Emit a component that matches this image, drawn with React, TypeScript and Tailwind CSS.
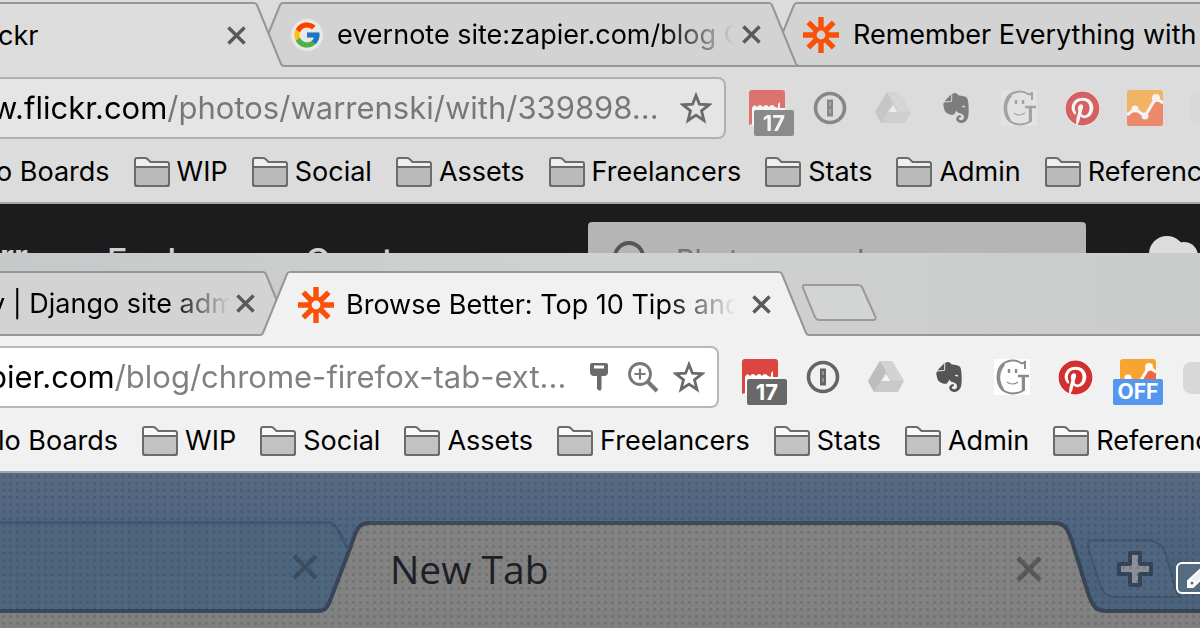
import type { ReactNode } from "react";
import { FaEvernote, FaPinterest } from "react-icons/fa";
import { FcGoogle } from "react-icons/fc";

type Tone = "dim" | "bright";

function CloseIcon({ className }: { className: string }) {
  return (
    <svg viewBox="0 0 20 20" className={className} fill="none" stroke="currentColor" strokeWidth="3.6" aria-hidden="true">
      <path d="M1.5 1.5L18.5 18.5M18.5 1.5L1.5 18.5" />
    </svg>
  );
}

function ZapierIcon() {
  return (
    <svg viewBox="0 0 36 36" className="size-9 shrink-0" stroke="#f9500a" strokeWidth="5.4" fill="none" aria-hidden="true">
      <path d="M18 0V12M18 24V36M0 18H12M24 18H36M5.3 5.3L14 14M22 22L30.7 30.7M30.7 5.3L22 14M14 22L5.3 30.7" />
      <circle cx="18" cy="18" r="6.4" strokeWidth="4" />
    </svg>
  );
}

function FolderIcon() {
  return (
    <svg viewBox="0 0 36 30" className="h-[30px] w-9 shrink-0" stroke="#6b6b6b" strokeWidth="2" aria-hidden="true">
      <path d="M1 27V3Q1 1 3 1H11Q13 1 14.500 3L16.500 5H33Q35 5 35 7V27Q35 29 33 29H3Q1 29 1 27Z" fill="#ffffff" fillOpacity=".55" />
      <path d="M1 10H35V27Q35 29 33 29H3Q1 29 1 27Z" className="fill-black/22" />
    </svg>
  );
}

function StarIcon() {
  return (
    <svg viewBox="0 0 32 32" className="size-8" fill="none" stroke="#6a6a6a" strokeWidth="2.8" aria-hidden="true">
      <path d="M16 3.500L19.400 12.200L29 12.800L21.500 18.800L24 28.500L16 23.200L8 28.500L10.500 18.800L3 12.800L12.600 12.200Z" />
    </svg>
  );
}

function KeyIcon() {
  return (
    <svg viewBox="0 0 20 28" className="h-7 w-5" fill="#6a6a6a" aria-hidden="true">
      <path fillRule="evenodd" d="M3 0H17Q19 0 19 2V9Q19 13 15 13H12.500V26L11 28L8 26V13H5Q1 13 1 9V2Q1 0 3 0ZM5 2.500V5.500H15V2.500Z" />
    </svg>
  );
}

function ZoomIcon() {
  return (
    <svg viewBox="0 0 32 32" className="size-8" fill="none" stroke="#777" strokeWidth="2.800" aria-hidden="true">
      <circle cx="13" cy="13" r="10.500" />
      <path d="M20.500 20.500L30 30" strokeWidth="4" />
      <path d="M13 7.500V18.500M7.500 13H18.500" strokeWidth="2.200" />
    </svg>
  );
}

function CalendarIcon() {
  return (
    <svg viewBox="0 0 36 36" className="size-9" aria-hidden="true">
      <path d="M3 0H33Q36 0 36 3V18H3V34L0 35V3Q0 0 3 0Z" fill="#dc4640" />
      <path d="M3 36V18Q5 13 8 17Q11 13 14 17Q17 13 20 17Q23 13 26 17L29 18V14L31 12V18H36V36Z" fill="#fff" />
    </svg>
  );
}

function OnePasswordIcon() {
  return (
    <svg viewBox="0 0 36 36" className="size-9" fill="none" stroke="#646464" aria-hidden="true">
      <circle cx="18" cy="18" r="14.500" strokeWidth="3.600" />
      <path d="M18 9.500V26.500" strokeWidth="6" />
      <path d="M18 12V24" strokeWidth="1.500" stroke="#a0a0a0" strokeDasharray="4 3" />
    </svg>
  );
}

function DriveIcon() {
  return (
    <svg viewBox="0 0 36 36" className="size-9" aria-hidden="true">
      <path d="M12 2H24L36 22L30 33H6L0 22Z" fill="#c9c9c9" />
      <path d="M12 2L18 12L6 33L0 22Z" fill="#bdbdbd" />
      <path d="M12 2H24L36 22H24Z" fill="#d3d3d3" />
      <path d="M18 15L22.500 22H13.500Z" fill="#f4f4f4" />
    </svg>
  );
}

function FaceIcon({ tone }: { tone: Tone }) {
  return (
    <svg viewBox="0 0 36 36" className="size-9" fill="none" stroke="#8b8b8b" aria-hidden="true">
      <rect width="36" height="36" fill="#fff" fillOpacity={tone === "dim" ? 0.25 : 0.9} stroke="none" />
      <path d="M31 10V2Q30 5 27 4Q23 1 18 1.500Q4 3 3.500 18Q4 33 18 34.500Q25 34.500 30 31V17" strokeWidth="2" />
      <path d="M10 5Q0 17 9 31" strokeWidth="2.800" />
      <path d="M24 17H35M29 17V32" strokeWidth="2.400" />
      <path d="M15 10V14M22 10V14" strokeWidth="2.400" />
      <path d="M13 23Q18 27 24 23" strokeWidth="1.200" />
    </svg>
  );
}

function AnalyticsIcon() {
  return (
    <svg viewBox="0 0 36 36" className="size-9" aria-hidden="true">
      <rect width="36" height="36" rx="3" fill="#f9a432" />
      <path d="M0 24L8 19L18 27L29 9L36 14V33Q36 36 33 36H3Q0 36 0 33Z" fill="#f2673a" />
      <path d="M0 25L8 19L18 26L29 8L36 13" fill="none" stroke="#fff" strokeWidth="3" />
      <circle cx="8" cy="19" r="3.500" fill="#fff" />
      <circle cx="18" cy="26" r="3.500" fill="#fff" />
      <circle cx="29" cy="8" r="4" fill="#fff" />
    </svg>
  );
}

function TabEdge({ side, fill, active }: { side: "left" | "right"; fill: string; active?: boolean }) {
  const right = side === "right";
  const line = right ? "M0 1Q2 1 3 3L27 62Q28 64 30 64" : "M30 1Q28 1 27 3L3 62Q2 64 0 64";
  return (
    <svg viewBox="0 0 30 65" className="h-[65px] w-[30px] shrink-0" aria-hidden="true">
      <path d={right ? line + "V65H0Z" : line + "V65H30Z"} fill={fill} />
      <path d={line} fill="none" stroke="#969696" strokeWidth="2" />
      {!active && <path d="M0 64H30" stroke="#969696" strokeWidth="2" />}
    </svg>
  );
}

const bookmarks = ["WIP", "Social", "Assets", "Freelancers", "Stats", "Admin", "References"];

function BookmarkBar({ first, firstClass }: { first: string; firstClass: string }) {
  return (
    <nav aria-label="Bookmarks" className="flex h-[62px] items-center gap-6 overflow-hidden border-b-2 border-[#a6a6a6] whitespace-nowrap">
      <a href="#boards" className={`shrink-0 ${firstClass}`}>{first}</a>
      {bookmarks.map((name) => (
        <a key={name} href={`#${name.toLowerCase()}`} className="flex shrink-0 items-center gap-[7px]">
          <FolderIcon />
          {name}
        </a>
      ))}
    </nav>
  );
}

function ExtButton({ label, children }: { label: string; children: ReactNode }) {
  return (
    <button type="button" aria-label={label} className="relative flex size-9 shrink-0 items-center justify-center">
      {children}
    </button>
  );
}

function Extensions({ tone }: { tone: Tone }) {
  return (
    <div className={`flex shrink-0 gap-[27px] overflow-hidden py-4 pl-[23px] ${tone === "dim" ? "w-[474px] opacity-70" : "w-[481px]"}`}>
      <ExtButton label="Calendar">
        <CalendarIcon />
        <span className="absolute top-5 left-[5px] flex h-[26px] w-10 items-center justify-center rounded-xs bg-[#686868] text-[22px] leading-6 font-bold text-white">17</span>
      </ExtButton>
      <ExtButton label="Password manager"><OnePasswordIcon /></ExtButton>
      <ExtButton label="Drive"><DriveIcon /></ExtButton>
      <ExtButton label="Notes"><FaEvernote className="size-[34px] text-[#555]" /></ExtButton>
      <ExtButton label="Face"><FaceIcon tone={tone} /></ExtButton>
      <ExtButton label="Pinterest"><FaPinterest className="size-[35px] rounded-full bg-white text-[#d32f2f]" /></ExtButton>
      <ExtButton label="Analytics">
        <AnalyticsIcon />
        {tone === "bright" && (
          <span className="absolute top-5 -left-[7px] flex h-[26px] w-[50px] items-center justify-center rounded-xs bg-[#5596ee] text-[21px] leading-6 font-bold text-white">OFF</span>
        )}
      </ExtButton>
      <ExtButton label="More"><span className="mt-px h-8 w-9 rounded-lg bg-[#d8d8d8]" /></ExtButton>
    </div>
  );
}

function FlickrWindow() {
  return (
    <section className="h-[253px] shrink-0 overflow-hidden bg-[#dcdcdc]">
      <div className="flex border-b-2 border-[#969696] pt-[2px]">
        <div className="relative z-20 -mb-0.5 flex w-[284px] shrink-0">
          <div className="flex min-w-0 flex-1 items-center justify-between border-t-2 border-[#969696] bg-[#dcdcdc] pr-2">
            <span className="-indent-0.5">ckr</span>
            <button type="button" aria-label="Close tab"><CloseIcon className="size-[19px] text-[#5a5a5a]" /></button>
          </div>
          <TabEdge side="right" fill="#dcdcdc" active />
        </div>
        <div className="relative z-10 -mb-0.5 -ml-[31px] flex w-[546px] shrink-0">
          <TabEdge side="left" fill="#d3d3d3" />
          <div className="flex min-w-0 flex-1 items-center border-y-2 border-[#969696] bg-[#d3d3d3] pr-2 pl-2">
            <span className="flex size-8 shrink-0 items-center justify-center rounded-full bg-[#e8e8e8]"><FcGoogle className="size-[30px]" /></span>
            <span className="ml-3.5 min-w-0 flex-1 overflow-hidden whitespace-nowrap [mask-image:linear-gradient(90deg,#000_82%,transparent)]">evernote site:zapier.com/blog Google</span>
            <button type="button" aria-label="Close tab" className="ml-2"><CloseIcon className="size-[19px] text-[#5a5a5a]" /></button>
          </div>
          <TabEdge side="right" fill="#d3d3d3" />
        </div>
        <div className="-mb-0.5 -ml-8 flex min-w-0 flex-1">
          <TabEdge side="left" fill="#d3d3d3" />
          <div className="flex min-w-0 flex-1 items-center gap-3.5 overflow-hidden border-y-2 border-[#969696] bg-[#d3d3d3] pl-1.5 whitespace-nowrap">
            <ZapierIcon />
            <span>Remember Everything with</span>
          </div>
        </div>
      </div>
      <div className="flex items-center pt-[7px]">
        <div className="flex h-[62px] min-w-0 flex-1 items-center rounded-r-lg border-2 border-l-0 border-[#b0b0b0] bg-[#e5e5e5] pr-3">
          <input aria-label="Address" defaultValue="w.flickr.com/photos/warrenski/with/339898..." className="-ml-2 min-w-0 flex-1 bg-[linear-gradient(90deg,#000_176px,#777_176px)] bg-clip-text text-[31px] leading-9 text-transparent outline-none" />
          <button type="button" aria-label="Bookmark this page"><StarIcon /></button>
        </div>
        <Extensions tone="dim" />
      </div>
      <BookmarkBar first="o Boards" firstClass="-indent-1" />
      <div className="flex bg-[#1c1c1c]">
        <nav aria-label="Site" className="flex w-[588px] shrink-0 gap-[76px] pt-[37px] text-[34px] leading-10 font-medium text-[#d0d0d0]">
          <a href="#you" className="w-[31px] leading-8 font-bold">rr</a>
          <a href="#explore">Explore</a>
          <a href="#create">Create</a>
        </nav>
        <label className="mt-[18px] flex w-[498px] items-start gap-7 rounded-t-sm bg-[#b5b5b5] pl-6">
          <svg viewBox="0 0 36 36" className="mt-[18px] size-9 shrink-0" fill="none" stroke="#555" strokeWidth="4" aria-hidden="true">
            <circle cx="17" cy="17" r="14" />
            <path d="M27 27L35 35" />
          </svg>
          <input aria-label="Search" placeholder="Photos, people, or groups" className="mt-[18px] min-w-0 flex-1 text-[29px] leading-10 outline-none placeholder:text-[#737373]" />
        </label>
        <svg viewBox="0 0 52 36" className="mt-8 ml-[62px] h-9 w-[52px] shrink-0" fill="#dcdcdc" aria-hidden="true">
          <circle cx="19" cy="18" r="18" />
          <circle cx="36" cy="20" r="14" />
        </svg>
      </div>
    </section>
  );
}

function BlogWindow() {
  return (
    <section className="relative shrink-0 overflow-hidden bg-[#f1f1f1]">
      <div className="flex border-b-2 border-[#969696] bg-linear-to-r from-[#c6c8c9] via-[#d0d2d2] to-[#cacccc] pt-[18px]">
        <div className="-mb-0.5 flex w-[293px] shrink-0">
          <div className="flex min-w-0 flex-1 items-center justify-between border-y-2 border-[#969696] bg-[#d3d3d3] pr-2">
            <span className="overflow-hidden -indent-2.5 whitespace-nowrap [mask-image:linear-gradient(90deg,#000_72%,transparent_98%)]">y | Django site adm</span>
            <button type="button" aria-label="Close tab"><CloseIcon className="size-[19px] text-[#5a5a5a]" /></button>
          </div>
          <TabEdge side="right" fill="#d3d3d3" />
        </div>
        <div className="relative z-10 -mb-0.5 -ml-[33px] flex w-[549px] shrink-0">
          <TabEdge side="left" fill="#f1f1f1" active />
          <div className="flex min-w-0 flex-1 items-center border-t-2 border-[#969696] bg-[#f1f1f1] pr-2 pl-2">
            <ZapierIcon />
            <span className="ml-3 min-w-0 flex-1 overflow-hidden whitespace-nowrap [mask-image:linear-gradient(90deg,#000_80%,transparent_98%)]">Browse Better: Top 10 Tips and</span>
            <button type="button" aria-label="Close tab" className="ml-2"><CloseIcon className="size-[19px] text-[#5a5a5a]" /></button>
          </div>
          <TabEdge side="right" fill="#f1f1f1" active />
        </div>
        <button type="button" aria-label="New tab" className="-ml-2 self-center">
          <svg viewBox="0 0 76 38" className="h-[38px] w-[76px]" fill="#d3d5d5" stroke="#999" strokeWidth="2" aria-hidden="true">
            <path d="M4 1H57Q60 1 61 3L74 32Q76 36 72 36H19Q15 36 14 33L2 4Q1 1 4 1Z" />
          </svg>
        </button>
      </div>
      <div className="flex items-center pt-[7px]">
        <div className="flex h-[62px] min-w-0 flex-1 items-center rounded-r-lg border-2 border-l-0 border-[#b8b8b8] bg-white pr-3">
          <input aria-label="Address" defaultValue="pier.com/blog/chrome-firefox-tab-ext..." className="-ml-3 min-w-0 flex-1 bg-[linear-gradient(90deg,#000_128px,#808080_128px)] bg-clip-text text-[31px] leading-9 text-transparent outline-none" />
          <div className="flex items-center gap-3.5">
            <button type="button" aria-label="Saved password" className="mr-1"><KeyIcon /></button>
            <button type="button" aria-label="Zoom"><ZoomIcon /></button>
            <button type="button" aria-label="Bookmark this page"><StarIcon /></button>
          </div>
        </div>
        <Extensions tone="bright" />
      </div>
      <BookmarkBar first="lo Boards" firstClass="-indent-0.5" />
    </section>
  );
}

function ClassicWindow() {
  return (
    <section className="relative flex flex-1 flex-col bg-linear-to-b from-[#576983] to-[#4b627d] to-60% pt-12">
      <div className="flex">
        <div className="flex w-[350px] min-w-0 shrink-0">
          <div className="flex flex-1 items-center justify-end border-t-3 border-b-4 border-[#384a5f] border-t-[#44566e] bg-[#4d667e] pr-3">
            <button type="button" aria-label="Close tab"><CloseIcon className="size-[26px] text-[#3e4f62]" /></button>
          </div>
          <svg viewBox="0 0 20 92" className="h-[92px] w-5 shrink-0" aria-hidden="true">
            <path d="M0 1Q8 3 17 27L20 92H0Z" fill="#4d667e" />
            <path d="M0 1.500Q7 3 17 27" fill="none" stroke="#44566e" strokeWidth="3" />
          </svg>
        </div>
        <div className="relative -ml-8 flex min-w-0 flex-1">
          <svg viewBox="0 0 52 92" className="h-[92px] w-[52px] shrink-0" aria-hidden="true">
            <path d="M52 2C38 2 38 12 31 30L15 72C10 86 8 90 0 90V92H52Z" fill="#828282" />
            <path d="M52 2C38 2 38 12 31 30L15 72C10 86 8 90 0 90" fill="none" stroke="#3a4658" strokeWidth="4" />
          </svg>
          <div className="flex min-w-0 flex-1 items-center justify-between border-t-4 border-[#3f4b5c] bg-[#828282] pr-3 pl-5">
            <span className="font-['Open_Sans',sans-serif] text-[39px] leading-[48px] text-[#1d1f26]">New Tab</span>
            <button type="button" aria-label="Close tab"><CloseIcon className="size-[26px] text-[#595959]" /></button>
          </div>
          <svg viewBox="0 0 52 92" className="h-[92px] w-[52px] shrink-0" aria-hidden="true">
            <path d="M0 2C14 2 15 12 21 30L34 72C39 86 42 90 52 90V92H0Z" fill="#828282" />
            <path d="M0 2C14 2 15 12 21 30L34 72C39 86 42 90 52 90" fill="none" stroke="#3a4658" strokeWidth="4" />
          </svg>
        </div>
        <div className="-ml-5 flex w-[114px] shrink-0 items-start pt-[18px]">
          <button type="button" aria-label="New tab">
            <svg viewBox="0 0 96 60" className="h-[60px] w-24" aria-hidden="true">
              <path d="M5 1.500H62Q76 2 80 16L90 52Q92 58 96 58H28Q19 58 15 48L3 12Q0 3 5 1.500Z" fill="#506680" stroke="#43556d" strokeWidth="2" />
              <path d="M44 14H54V25H65V35H54V46H44V35H33V25H44Z" fill="#8b9096" stroke="#36445b" strokeWidth="4" strokeLinejoin="round" />
            </svg>
          </button>
        </div>
      </div>
      <div className="flex flex-1 bg-[#808080]">
        <div className="flex-1" />
        <div className="-mt-1 h-1 w-[96px] bg-[#3a4658]" />
      </div>
      <div className="pointer-events-none absolute inset-0 bg-[radial-gradient(circle,rgba(20,30,40,0.16)_1px,transparent_2px)] bg-size-[7px_7px]" />
      <button type="button" aria-label="Edit" className="absolute top-[89px] -right-3 flex h-8 w-9 items-center justify-end rounded-md border-2 border-white bg-[#566a80]">
        <svg viewBox="0 0 24 24" className="size-6" fill="none" stroke="#fff" strokeWidth="2" aria-hidden="true">
          <path d="M2 21V15L16 2L21 7L7 21Z" fill="#e9edf1" />
          <circle cx="6" cy="17" r="2.500" fill="#566a80" />
        </svg>
      </button>
    </section>
  );
}

export default function App() {
  return (
    <main className="flex min-h-screen flex-col overflow-hidden bg-[#808080] font-[Inter,sans-serif] text-[27px] leading-8 text-black">
      <FlickrWindow />
      <BlogWindow />
      <ClassicWindow />
    </main>
  );
}
